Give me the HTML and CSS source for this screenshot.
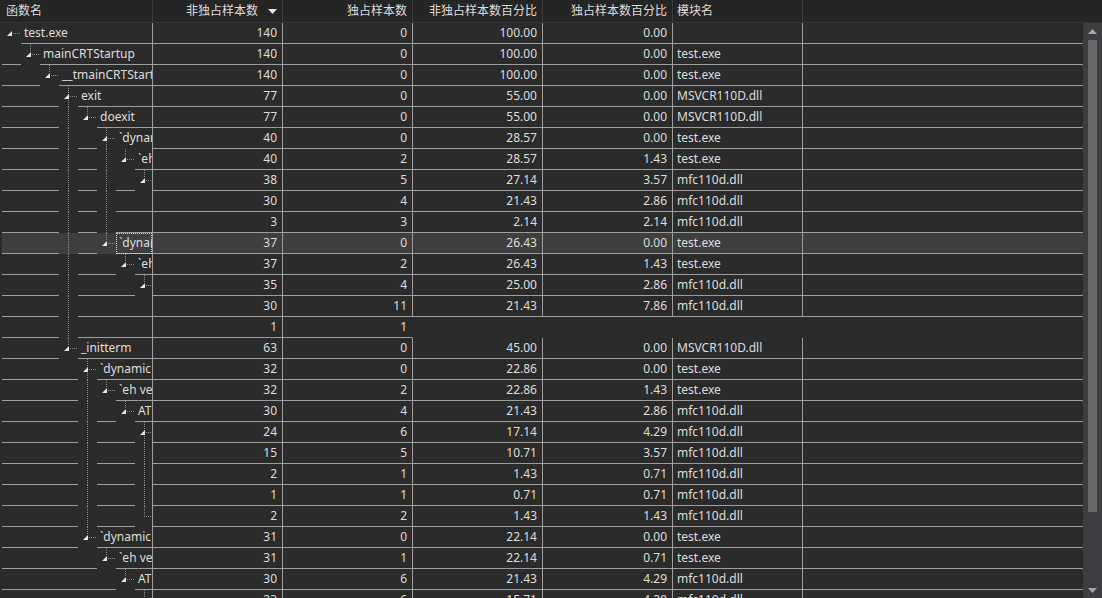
FILE: index.html
```html
<!DOCTYPE html>
<html lang="zh-CN">

<head>
    <meta charset="UTF-8">
    <title>调用树</title>
    <link rel="stylesheet" href="styles.css">
</head>

<body>
    <div class="view">
        <div class="head">
            <div class="hc c1">函数名</div>
            <div class="hc cn sorted">非独占样本数<svg class="arrow" width="9" height="5"><path d="M0 0H9L4.5 5Z" fill="#e6e6e6"/></svg></div>
            <div class="hc cn">独占样本数</div>
            <div class="hc cn">非独占样本数百分比</div>
            <div class="hc cn">独占样本数百分比</div>
            <div class="hc cm">模块名</div>
            <div class="hc rest"></div>
        </div>
        <div class="body">
            <div class="rows">
                <div class="row">
                    <div class="c c1"><span class="s o x0"><i class="tri"></i></span><span class="lab">test.exe</span></div>
                    <div class="c cn">140</div><div class="c cn">0</div><div class="c cn">100.00</div><div class="c cn">0.00</div><div class="c cm"></div><div class="c rest"></div>
                </div>
                <div class="row">
                    <div class="c c1"><span class="s"></span><span class="s o x"><i class="tri"></i></span><span class="lab">mainCRTStartup</span></div>
                    <div class="c cn">140</div><div class="c cn">0</div><div class="c cn">100.00</div><div class="c cn">0.00</div><div class="c cm">test.exe</div><div class="c rest"></div>
                </div>
                <div class="row">
                    <div class="c c1"><span class="s"></span><span class="s"></span><span class="s o x"><i class="tri"></i></span><span class="lab">__tmainCRTStartup</span></div>
                    <div class="c cn">140</div><div class="c cn">0</div><div class="c cn">100.00</div><div class="c cn">0.00</div><div class="c cm">test.exe</div><div class="c rest"></div>
                </div>
                <div class="row">
                    <div class="c c1"><span class="s"></span><span class="s"></span><span class="s"></span><span class="s o xv"><i class="tri"></i></span><span class="lab">exit</span></div>
                    <div class="c cn">77</div><div class="c cn">0</div><div class="c cn">55.00</div><div class="c cn">0.00</div><div class="c cm">MSVCR110D.dll</div><div class="c rest"></div>
                </div>
                <div class="row">
                    <div class="c c1"><span class="s"></span><span class="s"></span><span class="s"></span><span class="s o v"></span><span class="s o x"><i class="tri"></i></span><span class="lab">doexit</span></div>
                    <div class="c cn">77</div><div class="c cn">0</div><div class="c cn">55.00</div><div class="c cn">0.00</div><div class="c cm">MSVCR110D.dll</div><div class="c rest"></div>
                </div>
                <div class="row">
                    <div class="c c1"><span class="s"></span><span class="s"></span><span class="s"></span><span class="s o v"></span><span class="s"></span><span class="s o xv"><i class="tri"></i></span><span class="lab o">`dynamic atexit</span></div>
                    <div class="c cn">40</div><div class="c cn">0</div><div class="c cn">28.57</div><div class="c cn">0.00</div><div class="c cm">test.exe</div><div class="c rest"></div>
                </div>
                <div class="row">
                    <div class="c c1"><span class="s"></span><span class="s"></span><span class="s"></span><span class="s o v"></span><span class="s"></span><span class="s o v"></span><span class="s o x"><i class="tri"></i></span><span class="lab">`eh vector</span></div>
                    <div class="c cn">40</div><div class="c cn">2</div><div class="c cn">28.57</div><div class="c cn">1.43</div><div class="c cm">test.exe</div><div class="c rest"></div>
                </div>
                <div class="row">
                    <div class="c c1"><span class="s"></span><span class="s"></span><span class="s"></span><span class="s o v"></span><span class="s"></span><span class="s o v"></span><span class="s"></span><span class="s o x"><i class="tri"></i></span></div>
                    <div class="c cn">38</div><div class="c cn">5</div><div class="c cn">27.14</div><div class="c cn">3.57</div><div class="c cm">mfc110d.dll</div><div class="c rest"></div>
                </div>
                <div class="row">
                    <div class="c c1"><span class="s"></span><span class="s"></span><span class="s"></span><span class="s o v"></span><span class="s"></span><span class="s o v"></span><span class="s"></span><span class="s"></span></div>
                    <div class="c cn">30</div><div class="c cn">4</div><div class="c cn">21.43</div><div class="c cn">2.86</div><div class="c cm">mfc110d.dll</div><div class="c rest"></div>
                </div>
                <div class="row">
                    <div class="c c1"><span class="s"></span><span class="s"></span><span class="s"></span><span class="s o v"></span><span class="s"></span><span class="s o v"></span><span class="s"></span><span class="s"></span></div>
                    <div class="c cn">3</div><div class="c cn">3</div><div class="c cn">2.14</div><div class="c cn">2.14</div><div class="c cm">mfc110d.dll</div><div class="c rest"></div>
                </div>
                <div class="row sel">
                    <div class="c c1"><span class="s"></span><span class="s"></span><span class="s"></span><span class="s o v"></span><span class="s"></span><span class="s o x"><i class="tri"></i></span><span class="lab focus">`dynamic atexit</span></div>
                    <div class="c cn">37</div><div class="c cn">0</div><div class="c cn">26.43</div><div class="c cn">0.00</div><div class="c cm">test.exe</div><div class="c rest"></div>
                </div>
                <div class="row">
                    <div class="c c1"><span class="s"></span><span class="s"></span><span class="s"></span><span class="s o v"></span><span class="s"></span><span class="s"></span><span class="s o x"><i class="tri"></i></span><span class="lab">`eh vector</span></div>
                    <div class="c cn">37</div><div class="c cn">2</div><div class="c cn">26.43</div><div class="c cn">1.43</div><div class="c cm">test.exe</div><div class="c rest"></div>
                </div>
                <div class="row">
                    <div class="c c1"><span class="s"></span><span class="s"></span><span class="s"></span><span class="s o v"></span><span class="s"></span><span class="s"></span><span class="s"></span><span class="s o x"><i class="tri"></i></span></div>
                    <div class="c cn">35</div><div class="c cn">4</div><div class="c cn">25.00</div><div class="c cn">2.86</div><div class="c cm">mfc110d.dll</div><div class="c rest"></div>
                </div>
                <div class="row">
                    <div class="c c1"><span class="s"></span><span class="s"></span><span class="s"></span><span class="s o v"></span><span class="s"></span><span class="s"></span><span class="s"></span><span class="s"></span></div>
                    <div class="c cn">30</div><div class="c cn">11</div><div class="c cn">21.43</div><div class="c cn">7.86</div><div class="c cm">mfc110d.dll</div><div class="c rest"></div>
                </div>
                <div class="row">
                    <div class="c c1"><span class="s"></span><span class="s"></span><span class="s"></span><span class="s o v"></span><span class="s"></span><span class="s"></span><span class="s"></span><span class="s"></span></div>
                    <div class="c cn">1</div><div class="c cn last">1</div><div class="blank"></div>
                </div>
                <div class="row">
                    <div class="c c1"><span class="s"></span><span class="s"></span><span class="s"></span><span class="s o x"><i class="tri"></i></span><span class="lab">_initterm</span></div>
                    <div class="c cn">63</div><div class="c cn">0</div><div class="c cn">45.00</div><div class="c cn">0.00</div><div class="c cm">MSVCR110D.dll</div><div class="c rest"></div>
                </div>
                <div class="row">
                    <div class="c c1"><span class="s"></span><span class="s"></span><span class="s"></span><span class="s"></span><span class="s o xv"><i class="tri"></i></span><span class="lab">`dynamic initializer</span></div>
                    <div class="c cn">32</div><div class="c cn">0</div><div class="c cn">22.86</div><div class="c cn">0.00</div><div class="c cm">test.exe</div><div class="c rest"></div>
                </div>
                <div class="row">
                    <div class="c c1"><span class="s"></span><span class="s"></span><span class="s"></span><span class="s"></span><span class="s o v"></span><span class="s o x"><i class="tri"></i></span><span class="lab">`eh vector</span></div>
                    <div class="c cn">32</div><div class="c cn">2</div><div class="c cn">22.86</div><div class="c cn">1.43</div><div class="c cm">test.exe</div><div class="c rest"></div>
                </div>
                <div class="row">
                    <div class="c c1"><span class="s"></span><span class="s"></span><span class="s"></span><span class="s"></span><span class="s o v"></span><span class="s"></span><span class="s o x"><i class="tri"></i></span><span class="lab">ATL::</span></div>
                    <div class="c cn">30</div><div class="c cn">4</div><div class="c cn">21.43</div><div class="c cn">2.86</div><div class="c cm">mfc110d.dll</div><div class="c rest"></div>
                </div>
                <div class="row">
                    <div class="c c1"><span class="s"></span><span class="s"></span><span class="s"></span><span class="s"></span><span class="s o v"></span><span class="s"></span><span class="s"></span><span class="s o xv"><i class="tri"></i></span></div>
                    <div class="c cn">24</div><div class="c cn">6</div><div class="c cn">17.14</div><div class="c cn">4.29</div><div class="c cm">mfc110d.dll</div><div class="c rest"></div>
                </div>
                <div class="row">
                    <div class="c c1"><span class="s"></span><span class="s"></span><span class="s"></span><span class="s"></span><span class="s o v"></span><span class="s"></span><span class="s"></span><span class="s o v"></span></div>
                    <div class="c cn">15</div><div class="c cn">5</div><div class="c cn">10.71</div><div class="c cn">3.57</div><div class="c cm">mfc110d.dll</div><div class="c rest"></div>
                </div>
                <div class="row">
                    <div class="c c1"><span class="s"></span><span class="s"></span><span class="s"></span><span class="s"></span><span class="s o v"></span><span class="s"></span><span class="s"></span><span class="s o v"></span></div>
                    <div class="c cn">2</div><div class="c cn">1</div><div class="c cn">1.43</div><div class="c cn">0.71</div><div class="c cm">mfc110d.dll</div><div class="c rest"></div>
                </div>
                <div class="row">
                    <div class="c c1"><span class="s"></span><span class="s"></span><span class="s"></span><span class="s"></span><span class="s o v"></span><span class="s"></span><span class="s"></span><span class="s o v"></span></div>
                    <div class="c cn">1</div><div class="c cn">1</div><div class="c cn">0.71</div><div class="c cn">0.71</div><div class="c cm">mfc110d.dll</div><div class="c rest"></div>
                </div>
                <div class="row">
                    <div class="c c1"><span class="s"></span><span class="s"></span><span class="s"></span><span class="s"></span><span class="s o v"></span><span class="s"></span><span class="s"></span><span class="s o l"></span></div>
                    <div class="c cn">2</div><div class="c cn">2</div><div class="c cn">1.43</div><div class="c cn">1.43</div><div class="c cm">mfc110d.dll</div><div class="c rest"></div>
                </div>
                <div class="row">
                    <div class="c c1"><span class="s"></span><span class="s"></span><span class="s"></span><span class="s"></span><span class="s o x"><i class="tri"></i></span><span class="lab">`dynamic initializer</span></div>
                    <div class="c cn">31</div><div class="c cn">0</div><div class="c cn">22.14</div><div class="c cn">0.00</div><div class="c cm">test.exe</div><div class="c rest"></div>
                </div>
                <div class="row">
                    <div class="c c1"><span class="s"></span><span class="s"></span><span class="s"></span><span class="s"></span><span class="s"></span><span class="s o x"><i class="tri"></i></span><span class="lab">`eh vector</span></div>
                    <div class="c cn">31</div><div class="c cn">1</div><div class="c cn">22.14</div><div class="c cn">0.71</div><div class="c cm">test.exe</div><div class="c rest"></div>
                </div>
                <div class="row">
                    <div class="c c1"><span class="s"></span><span class="s"></span><span class="s"></span><span class="s"></span><span class="s"></span><span class="s"></span><span class="s o x"><i class="tri"></i></span><span class="lab">ATL::</span></div>
                    <div class="c cn">30</div><div class="c cn">6</div><div class="c cn">21.43</div><div class="c cn">4.29</div><div class="c cm">mfc110d.dll</div><div class="c rest"></div>
                </div>
                <div class="row">
                    <div class="c c1"><span class="s"></span><span class="s"></span><span class="s"></span><span class="s"></span><span class="s"></span><span class="s"></span><span class="s"></span><span class="s o x"><i class="tri"></i></span></div>
                    <div class="c cn">23</div><div class="c cn">6</div><div class="c cn">15.71</div><div class="c cn">4.29</div><div class="c cm">mfc110d.dll</div><div class="c rest"></div>
                </div>
            </div>
            <div class="scroll">
                <svg class="btn" width="9" height="5"><path d="M0 5H9L4.5 0Z" fill="#a8a8a8"/></svg>
                <div class="thumb"></div>
                <div class="track"></div>
                <svg class="btn down" width="9" height="5"><path d="M0 0H9L4.5 5Z" fill="#a8a8a8"/></svg>
            </div>
        </div>
    </div>
</body>

</html>
```

FILE: styles.css
```css
:root {
    --dv: repeating-linear-gradient(#8c8c8c 0 1px, transparent 1px 2px);
    --dh: repeating-linear-gradient(to right, #8c8c8c 0 1px, transparent 1px 2px);
}

* {
    box-sizing: border-box;
}

body {
    margin: 0;
    background-color: #2b2b2b;
    color: #dedede;
    font-family: "Noto Sans", "Noto Sans CJK SC", sans-serif;
    font-size: 12px;
}

.view {
    width: 1102px;
    height: 598px;
    display: flex;
    flex-direction: column;
    overflow: hidden;
}

/* 表头 */
.head {
    flex: none;
    display: flex;
    height: 23px;
    background-color: #252525;
    border-bottom: 1px solid #353535;
}

.hc {
    line-height: 22px;
    white-space: nowrap;
    overflow: hidden;
    border-right: 1px solid #3d3d3d;
}

.head .c1 {
    padding-left: 6px;
}

.sorted {
    display: flex;
    justify-content: flex-end;
    align-items: center;
}

.arrow {
    margin-left: 10px;
}

.c1 {
    flex: none;
    width: 153px;
}

.cn {
    flex: none;
    width: 130px;
    text-align: right;
    padding-right: 5px;
}

.cm {
    flex: none;
    width: 130px;
    padding-left: 4px;
}

.rest {
    flex: 1;
    border-right: 0;
}

/* 数据区 */
.body {
    flex: 1;
    display: flex;
    min-height: 0;
}

.rows {
    flex: 1;
    overflow: hidden;
}

.row {
    display: flex;
    height: 21px;
}

.c {
    height: 21px;
    line-height: 20px;
    white-space: nowrap;
    overflow: hidden;
    border-bottom: 1px solid #9e9e9e;
}

.c.c1,
.c.cn,
.c.cm {
    border-right: 1px solid #9e9e9e;
}

.c.cn.last {
    border-right-color: transparent;
}

.blank {
    flex: 1;
}

.row .c1 {
    display: flex;
    padding-left: 2px;
    border-bottom: 0;
}

.row.sel .c {
    background-color: #3f3f3f;
}

.row.sel .c1 {
    background-clip: content-box;
}

/* 树的缩进格 */
.s {
    flex: none;
    width: 19px;
    height: 21px;
    border-bottom: 1px solid #9e9e9e;
    background-repeat: no-repeat;
    background-origin: border-box;
}

.s.o,
.lab.o {
    border-bottom-color: transparent;
}

.x0 {
    background-image: var(--dh);
    background-size: 8px 1px;
    background-position: 11px 10px;
}

.x {
    background-image: var(--dv), var(--dh);
    background-size: 1px 8px, 8px 1px;
    background-position: 9px 0, 11px 10px;
}

.xv {
    background-image: var(--dv), var(--dh);
    background-size: 1px 100%, 8px 1px;
    background-position: 9px 0, 11px 10px;
}

.v {
    background-image: var(--dv);
    background-size: 1px 100%;
    background-position: 9px 0;
}

.l {
    background-image: var(--dv), var(--dh);
    background-size: 1px 11px, 10px 1px;
    background-position: 9px 0, 9px 10px;
}

.tri {
    display: block;
    width: 0;
    height: 0;
    margin: 8px 0 0 5px;
    border-left: 5px solid transparent;
    border-bottom: 5px solid #e8e8e8;
}

.lab {
    flex: 1;
    min-width: 0;
    height: 21px;
    padding-left: 3px;
    overflow: hidden;
    border-bottom: 1px solid #9e9e9e;
}

.lab.focus {
    outline: 1px dotted #d8d8d8;
    outline-offset: -1px;
}

/* 滚动条 */
.scroll {
    flex: none;
    width: 19px;
    background-color: #3e3e42;
    display: flex;
    flex-direction: column;
    align-items: center;
    padding: 6px 0 5px;
}

.thumb {
    width: 9px;
    height: 472px;
    margin-top: 6px;
    background-color: #686868;
}

.track {
    flex: 1;
}
```
